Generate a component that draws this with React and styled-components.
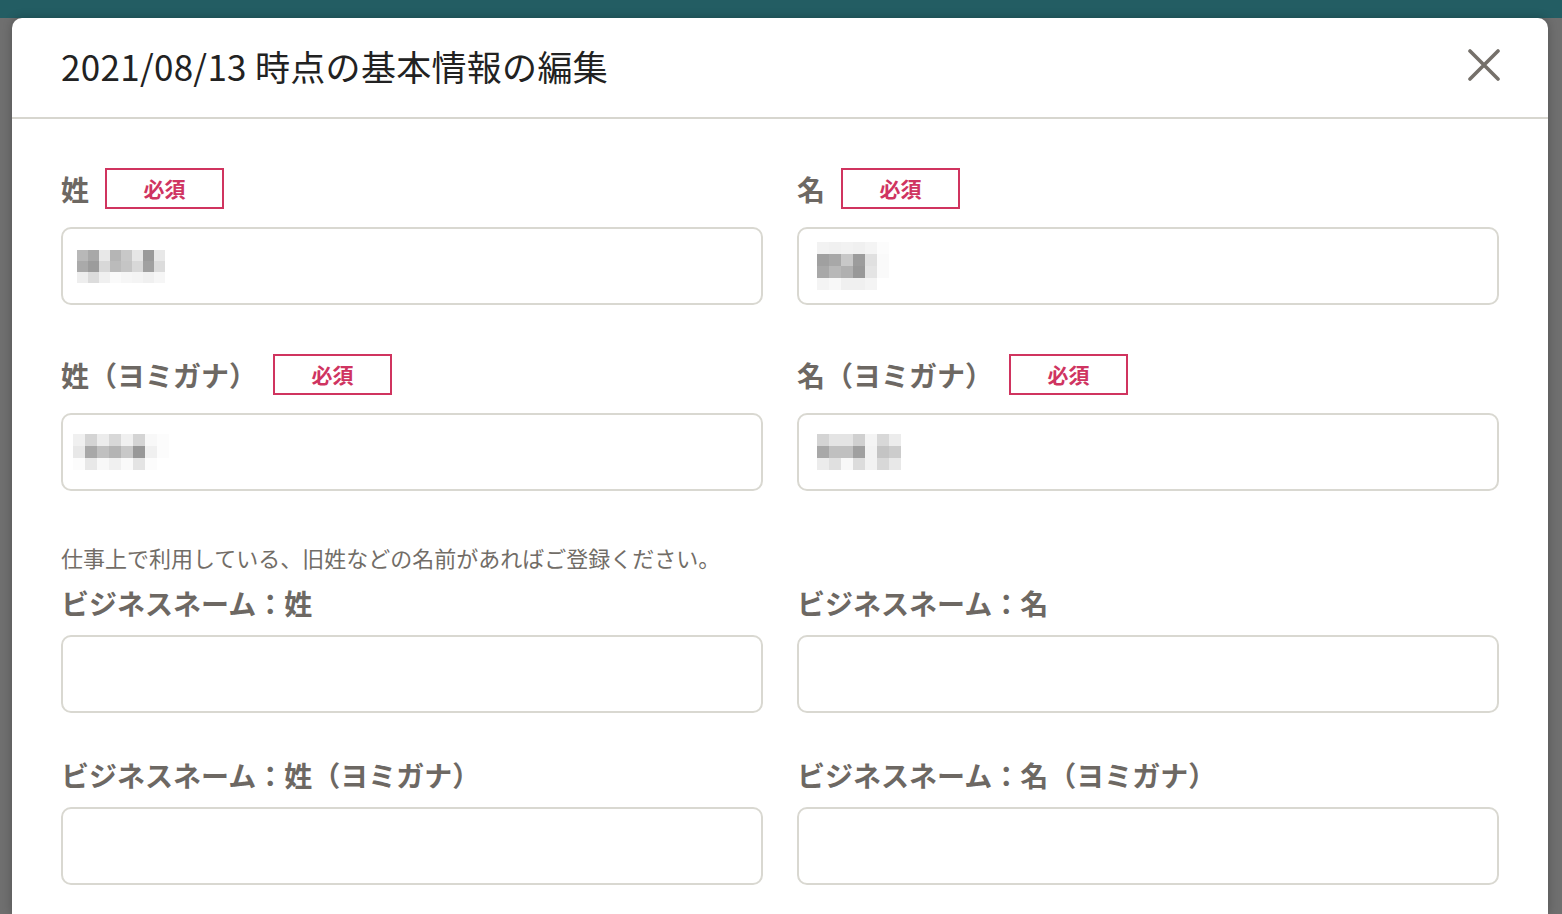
import styled, { createGlobalStyle } from "styled-components";

const GlobalStyle = createGlobalStyle`
  html, body {
    margin: 0;
    padding: 0;
    height: 100%;
    overflow: hidden;
  }
  body {
    font-family: "Noto Sans CJK JP", "Noto Sans", sans-serif;
  }
  * {
    box-sizing: border-box;
  }
`;

const Backdrop = styled.div`
  height: 100vh;
  padding: 18px 14px 0 12px;
  background: linear-gradient(#235d63 0, #235d63 18px, #6f6f6f 18px);
`;

const Modal = styled.div`
  height: 100%;
  background: #fff;
  border-radius: 10px 10px 0 0;
  box-shadow: 0 0 10px rgba(0, 0, 0, 0.25);
  overflow: hidden;
`;

const Header = styled.div`
  display: flex;
  align-items: center;
  justify-content: space-between;
  height: 101px;
  padding: 0 48px 4px 49px;
  border-bottom: 2px solid #d7d6cf;
`;

const Title = styled.h2`
  margin: 0;
  font-size: 35px;
  font-weight: 400;
  color: #222;
  letter-spacing: 0.3px;
`;

const CloseButton = styled.button`
  display: flex;
  align-items: center;
  justify-content: center;
  width: 32px;
  height: 32px;
  padding: 0;
  border: none;
  background: none;
  color: #75706a;
  cursor: pointer;
  margin-top: -2px;
`;

const Body = styled.div`
  padding: 49px 49px 0;
`;

const Grid = styled.div`
  display: grid;
  grid-template-columns: 1fr 1fr;
  column-gap: 34px;
  row-gap: ${(p) => p.$rowGap}px;
  margin-top: ${(p) => p.$top || 0}px;
`;

const Field = styled.div`
  display: flex;
  flex-direction: column;
  gap: ${(p) => p.$gap}px;
`;

const LabelRow = styled.div`
  display: flex;
  align-items: center;
  gap: 16px;
  height: ${(p) => (p.$tall ? 41 : 40)}px;
`;

const Label = styled.label`
  font-size: 28px;
  font-weight: 700;
  color: #6d6863;
  line-height: 1;
  white-space: nowrap;
`;

const Required = styled.span`
  display: flex;
  align-items: center;
  justify-content: center;
  width: 119px;
  height: 41px;
  border: 2px solid #d0345f;
  color: #cf3461;
  font-size: 21px;
  font-weight: 700;
  line-height: 1;
`;

const InputBox = styled.div`
  display: flex;
  align-items: center;
  height: 78px;
  padding: 0 ${(p) => p.$pad || 14}px;
  border: 2px solid #d9d8d1;
  border-radius: 10px;
  background: #fff;
`;

const Note = styled.p`
  margin: 50px 0 0;
  font-size: 22px;
  line-height: 32px;
  color: #726d67;
`;

const mosaics = {
  sei: {
    cell: 11,
    rows: [
      [0xb8, 0xa8, 0xe8, 0xb5, 0xc8, 0xe6, 0x9a, 0xe8],
      [0xaa, 0x9c, 0xd8, 0xbb, 0xc5, 0xd8, 0xa0, 0xdc],
      [0xee, 0xdc, 0xf0, 0xfa, 0xf6, 0xf4, 0xf0, 0xf6],
    ],
  },
  mei: {
    cell: 12,
    rows: [
      [0xf2, 0xf0, 0xf2, 0xf0, 0xf4, 0xfc],
      [0xa0, 0xa8, 0xc8, 0x9c, 0xe0, 0xfa],
      [0xa8, 0xb8, 0xb0, 0x98, 0xe4, 0xfa],
      [0xf4, 0xf8, 0xf0, 0xf0, 0xf4, 0xff],
    ],
  },
  seiKana: {
    cell: 12,
    rows: [
      [0xf0, 0xd4, 0xec, 0xd8, 0xf0, 0xd4, 0xf8, 0xfc],
      [0xe8, 0xa8, 0xc0, 0xb4, 0xc8, 0x98, 0xf0, 0xfc],
      [0xfc, 0xe8, 0xf8, 0xf0, 0xfa, 0xe4, 0xfc, 0xff],
    ],
  },
  meiKana: {
    cell: 12,
    rows: [
      [0xd4, 0xe4, 0xe4, 0xd0, 0xf4, 0xd8, 0xec],
      [0xa8, 0xc0, 0xc0, 0xa0, 0xf2, 0xc4, 0xcc],
      [0xec, 0xe0, 0xf8, 0xdc, 0xf2, 0xd8, 0xe8],
    ],
  },
};

// ぼかし済みの入力値（モザイク）
const Mosaic = ({ cell, rows }) => (
  <svg width={rows[0].length * cell} height={rows.length * cell} aria-hidden="true">
    {rows.map((row, y) =>
      row.map((v, x) => (
        <rect
          key={`${x}-${y}`}
          x={x * cell}
          y={y * cell}
          width={cell}
          height={cell}
          fill={`rgb(${v},${v},${v})`}
        />
      ))
    )}
  </svg>
);

const CloseIcon = () => (
  <svg width="32" height="32" viewBox="0 0 32 32" fill="none">
    <path d="M2 2 L30 30 M30 2 L2 30" stroke="currentColor" strokeWidth="3.6" strokeLinecap="round" />
  </svg>
);

const requiredFields = [
  { label: "姓", mosaic: mosaics.sei, pad: 14 },
  { label: "名", mosaic: mosaics.mei, pad: 18 },
  { label: "姓（ヨミガナ）", mosaic: mosaics.seiKana, pad: 10 },
  { label: "名（ヨミガナ）", mosaic: mosaics.meiKana, pad: 18 },
];

const businessFields = [
  "ビジネスネーム：姓",
  "ビジネスネーム：名",
  "ビジネスネーム：姓（ヨミガナ）",
  "ビジネスネーム：名（ヨミガナ）",
];

export default function App() {
  return (
    <>
      <GlobalStyle />
      <Backdrop>
        <Modal>
          <Header>
            <Title>2021/08/13 時点の基本情報の編集</Title>
            <CloseButton aria-label="閉じる">
              <CloseIcon />
            </CloseButton>
          </Header>
          <Body>
            <Grid $rowGap={49}>
              {requiredFields.map((f) => (
                <Field key={f.label} $gap={18}>
                  <LabelRow $tall>
                    <Label>{f.label}</Label>
                    <Required>必須</Required>
                  </LabelRow>
                  <InputBox $pad={f.pad}>
                    <Mosaic {...f.mosaic} />
                  </InputBox>
                </Field>
              ))}
            </Grid>
            <Note>仕事上で利用している、旧姓などの名前があればご登録ください。</Note>
            <Grid $rowGap={42} $top={10}>
              {businessFields.map((label) => (
                <Field key={label} $gap={12}>
                  <LabelRow>
                    <Label>{label}</Label>
                  </LabelRow>
                  <InputBox />
                </Field>
              ))}
            </Grid>
          </Body>
        </Modal>
      </Backdrop>
    </>
  );
}
